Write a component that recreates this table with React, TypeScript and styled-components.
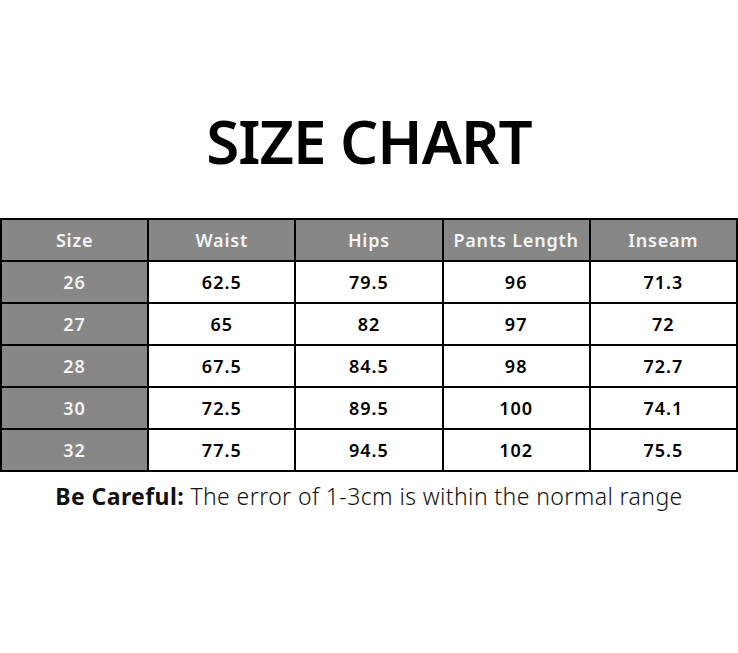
import React from "react";
import styled, { createGlobalStyle } from "styled-components";

const Global = createGlobalStyle`
  html, body { margin: 0; padding: 0; background: #ffffff; }
  body { font-family: "Noto Sans", "Open Sans", sans-serif; }
`;

const Page = styled.div`
  width: 738px;
  height: 653px;
  display: flex;
  flex-direction: column;
  align-items: center;
  background: #fff;
`;

const Title = styled.h1`
  margin: 101px 0 0 0;
  height: 117px;
  font-family: "Noto Sans", "Open Sans", sans-serif;
  font-weight: 600;
  font-size: 60px;
  line-height: 80px;
  letter-spacing: -1px;
  color: #000;
`;

const Table = styled.table`
  width: 738px;
  border-collapse: collapse;
  table-layout: fixed;
  border: 2px solid #000;
`;

const HeadCell = styled.th`
  height: 40px;
  padding: 0;
  background: #878787;
  color: #f4f4f4;
  border: 2px solid #000;
  font-weight: 600;
  font-size: 18px;
  line-height: 22px;
  letter-spacing: 0.8px;
  text-align: center;
  vertical-align: middle;
`;

const Cell = styled.td<{ $shaded?: boolean }>`
  height: 40px;
  padding: 0;
  background: ${(p) => (p.$shaded ? "#878787" : "#ffffff")};
  color: ${(p) => (p.$shaded ? "#f4f4f4" : "#000")};
  border: 2px solid #000;
  font-weight: 600;
  font-size: 18px;
  line-height: 22px;
  letter-spacing: 1px;
  text-align: center;
  vertical-align: middle;
`;

const Note = styled.p`
  margin: 9px 0 0 0;
  font-size: 23px;
  line-height: 30px;
  letter-spacing: 0.4px;
  color: #111;
  font-weight: 300;
`;

const NoteLabel = styled.span`
  font-weight: 700;
`;

const headers = ["Size", "Waist", "Hips", "Pants Length", "Inseam"];
const rows = [
  ["26", "62.5", "79.5", "96", "71.3"],
  ["27", "65", "82", "97", "72"],
  ["28", "67.5", "84.5", "98", "72.7"],
  ["30", "72.5", "89.5", "100", "74.1"],
  ["32", "77.5", "94.5", "102", "75.5"],
];

export default function App() {
  return (
    <>
      <Global />
      <Page>
        <Title>SIZE CHART</Title>
        <Table>
          <thead>
            <tr>
              {headers.map((h) => (
                <HeadCell key={h}>{h}</HeadCell>
              ))}
            </tr>
          </thead>
          <tbody>
            {rows.map((r) => (
              <tr key={r[0]}>
                {r.map((v, i) => (
                  <Cell key={i} $shaded={i === 0}>
                    {v}
                  </Cell>
                ))}
              </tr>
            ))}
          </tbody>
        </Table>
        <Note>
          <NoteLabel>Be Careful:</NoteLabel> The error of 1-3cm is within the normal range
        </Note>
      </Page>
    </>
  );
}
